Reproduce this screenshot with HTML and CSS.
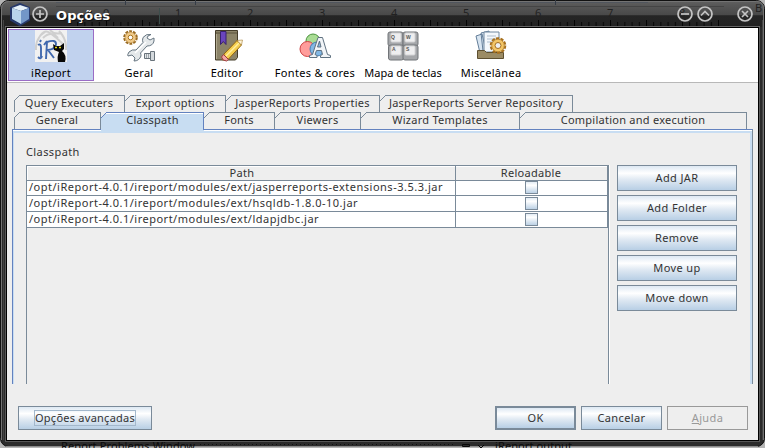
FILE: index.html
```html
<!DOCTYPE html>
<html lang="pt">
<head>
<meta charset="utf-8">
<title>Opções</title>
<link rel="stylesheet" href="styles.css">
</head>
<body>
<svg class="backdrop" width="765" height="448" viewBox="0 0 765 448" aria-hidden="true">
  <defs>
    <linearGradient id="bar" x1="0" y1="0" x2="0" y2="1"><stop offset="0" stop-color="#606060"/><stop offset=".15" stop-color="#585858"/><stop offset=".55" stop-color="#484848"/><stop offset=".56" stop-color="#252525"/><stop offset="1" stop-color="#222"/></linearGradient>
    <pattern id="tick" x="106" y="21" width="7.2" height="5" patternUnits="userSpaceOnUse"><path d="M.5 1v4" stroke="#050505"/></pattern>
    <pattern id="half" x="106" y="18" width="36" height="8" patternUnits="userSpaceOnUse"><path d="M.5 2v6" stroke="#050505"/></pattern>
    <pattern id="dots" width="4" height="4" patternUnits="userSpaceOnUse"><path d="M0 .5h1M2 2.5h1" stroke="#111"/></pattern>
  </defs>
  <rect width="765" height="448" fill="#b5b5b5"/>
  <rect x=".5" y=".5" width="764" height="446" rx="8" fill="#2b2b2b" stroke="#111"/>
  <path d="M1 27V9q0-8 8-8h747q8 0 8 8v18z" fill="url(#bar)"/>
  <path d="M1.500 440V9q0-7.500 8-7.500h747q7 0 7 7.500v431" fill="none" stroke="#737373"/>
  <path d="M56 2.500h592" stroke="#50555d"/><path d="M125.500 0v5M195.500 0v5M555.500 0v5" stroke="#353c46"/>
  <path d="M56 6.500h668" stroke="#444"/>
  <path d="M159.500 8v16" stroke="#3d4e4c"/>
  <rect x="77" y="21" width="642" height="5" fill="url(#tick)"/>
  <rect x="77" y="18" width="642" height="8" fill="url(#half)"/>
  <path d="M5 26.500h755" stroke="#666"/><path d="M5.500 27v415M759.500 27v415" stroke="#5a5a5a"/>
  <path d="M3.500 20v420M762.500 20v420" stroke="#444"/>
  <path d="M5 441.500h755" stroke="#555"/><path d="M6 446.500h752" stroke="#8a8a8a"/>
  <rect x="200" y="443" width="253" height="3" fill="url(#dots)"/>
  <rect x="6" y="27" width="753" height="414" fill="#000"/>
  <g class="ghost"><text x="103" y="17">0</text><text x="175" y="17">1</text><text x="247" y="17">2</text><text x="319" y="17">3</text><text x="391" y="17">4</text><text x="463" y="17">5</text><text x="535" y="17">6</text><text x="607" y="17">7</text><text x="679" y="17">8</text>
  <text x="755" y="12">B</text></g>
  <g class="ghost low"><text x="61" y="450" textLength="134">Report Problems Window</text><text x="495" y="450" textLength="77">iReport output</text></g>
  <path d="M462.500 444.500h7v2h-7zM478 445l3 3 3-3" fill="none" stroke="#080808"/>
</svg>
<main class="dialog">
  <header class="titlebar">
    <svg width="24" height="24" viewBox="0 0 24 24"><path d="M12 1L3 5v12l9 5 9-5V5z" fill="#182a55" stroke="#26386a" stroke-width="2"/><path d="M12 2L4 5l9 3 8-3z" fill="#e6f1f9"/><path d="M4 5l9 3v13l-9-5z" fill="#b9d4ec"/><path d="M13 8l8-3v11l-8 5z" fill="#7396c8"/></svg>
    <svg class="plus" width="18" height="18" viewBox="0 0 18 18"><circle cx="9" cy="9" r="7"/><path d="M5 9h8M9 5v8"/></svg>
    <h1>Opções</h1>
    <div class="controls">
      <svg width="18" height="18" viewBox="0 0 18 18"><circle cx="9" cy="9" r="7"/><path d="M5 9h8"/></svg>
      <svg width="18" height="18" viewBox="0 0 18 18"><circle cx="9" cy="9" r="7"/><path d="M5 10.500l4-4 4 4"/></svg>
      <svg class="close" width="18" height="18" viewBox="0 0 18 18"><circle cx="9" cy="9" r="7"/><path d="M6 6l6 6M12 6l-6 6"/></svg>
    </div>
  </header>
  <nav class="toolbar">
    <a class="tool active"><svg width="32" height="32" viewBox="0 0 32 32"><rect width="32" height="32" fill="#f1f1f1"/><path d="M3 10Q8-2 15 3t13 11M8 8q8-8 15 0M1 20Q0 8 10 2M24 1q8 8 7 19M15 0q4 5 12 3" fill="none" stroke="#cfcfcf" stroke-width="2"/><path d="M3 15q3-2 3 3v9M5 12l1-2M11 29l1-17q9-3 9 2 0 5-8 6l6 8M12 11l-3 4M3 27q3 3 4-1" fill="none" stroke="#4169ae" stroke-width="1.900"/><path d="M18 14l3 2h4l4-3v6l-2 2q5 4 3 11h-7q-1-6 1-10l-5-2z" fill="#080808"/><path d="M27 31q4-3 1-6" stroke="#080808" fill="none"/><path d="M20 17.500h2M24 17.500h2" stroke="#e9dc18" stroke-width="1.500"/></svg><span>iReport</span></a>
    <a class="tool"><svg width="32" height="32" viewBox="0 0 32 32"><circle cx="7.500" cy="7.500" r="6.300" fill="none" stroke="#996a22" stroke-width="2" stroke-dasharray="2.800 1.150"/><circle cx="7.500" cy="7.500" r="5.300" fill="#f0c987" stroke="#bd8c3c" stroke-width=".7"/><circle cx="7.500" cy="7.500" r="2.300" fill="#fff" stroke="#a87623"/><path d="M28 4.500q-5-1-8 3-1 3 0 5L13 20q-4-1-7 2-2 3-1 4l4-1 3 3-1 3q5 0 7-5 0-2-.5-3L24 16q6 0 7-5l0-3-4 2-3-2 1-2z" fill="#e4e8ea" stroke="#667581" stroke-linejoin="round"/><path d="M12 23l11-11" stroke="#fff" stroke-width="1.500"/><path d="M21.500 23.500h6v5h-6z" fill="#e3e6e8" stroke="#68727a"/><path d="M23.500 24v4M25.500 24v4" stroke="#9aa3a9"/><path d="M27.500 21.500h4v9h-4z" fill="#d3d8dc" stroke="#68727a"/></svg><span>Geral</span></a>
    <a class="tool"><svg width="32" height="32" viewBox="0 0 32 32"><g transform="translate(4 0)"><path d="M.5.500h22v27l-2 2.500H.5z" fill="#8b8368" stroke="#443c29"/><path d="M1 3h21" stroke="#58503a"/><path d="M1.500 4v25" stroke="#b0a98e"/><path d="M5.500 1.500h5.500v13l-2.700-3-2.800 3z" fill="#6a45bd" stroke="#38206d"/><path d="M9 24L22 10.500l4.500 4.500-13 14-6 1z" fill="#f5cf51" stroke="#926512"/><path d="M11 26l13-13" stroke="#fff0a1" stroke-width="1.500"/><path d="M8.500 24.500l5 5-2 1.500q-4 0-5-4z" fill="#f3a5a3" stroke="#9c3c3c"/><path d="M22 10.500l4.500 4.500 1-5z" fill="#fff4d6" stroke="#926512" stroke-width=".5"/></g></svg><span>Editor</span></a>
    <a class="tool"><svg width="32" height="32" viewBox="0 0 32 32"><circle cx="14" cy="11" r="7" fill="#a9dc94" stroke="#4b943d"/><circle cx="8.500" cy="19" r="7.500" fill="#ff9d9b" stroke="#cd4242"/><circle cx="18" cy="19" r="7" fill="#83b8e5" stroke="#447eaf"/><path d="M10.500 27.500v-2l3-1L19 7.500h4.500l5 17 3 1v2h-10v-2l2-1-1-4h-5l-1.500 4 2 1v2zM18.500 17h3.500l-1.500-6z" fill="#f2f5f8" stroke="#5f7180"/></svg><span>Fontes &amp; cores</span></a>
    <a class="tool"><svg width="32" height="32" viewBox="0 0 32 32"><g fill="#a5a7aa" stroke="#717478"><rect x="1" y="2" width="15" height="14" rx="2"/><rect x="16" y="2" width="15" height="14" rx="2"/><rect x="1.500" y="15" width="15" height="15" rx="2"/><rect x="16" y="15" width="15" height="15" rx="2"/></g><g fill="#eeeeef" stroke="#d4d4d5"><rect x="4" y="3" width="10" height="9" rx="1"/><rect x="18" y="3" width="10" height="9" rx="1"/><rect x="4" y="16" width="10" height="9" rx="1"/><rect x="18" y="16" width="10" height="9" rx="1"/></g><g class="keys"><text x="4" y="9">Q</text><text x="19" y="9">W</text><text x="5" y="21">A</text><text x="19" y="21">S</text></g></svg><span class="map">Mapa de teclas</span></a>
    <a class="tool"><svg width="32" height="32" viewBox="0 0 32 32"><path d="M1 6l6-2 4 17-6 2zM6 3l8-2 2 20H8z" fill="#d8e5f1" stroke="#647e99"/><path d="M9 2h15v20H9z" fill="#f4f8fc" stroke="#7188a0"/><path d="M12 6h9M12 9h9M12 12h6" stroke="#aebdcd"/><path d="M2.500 20.500h7l2 2h17v6h-26z" fill="#9b8b64" stroke="#5e5031"/><circle cx="23" cy="15.500" r="7.300" fill="none" stroke="#a66f1d" stroke-width="2" stroke-dasharray="3.300 1.290"/><circle cx="23" cy="15.500" r="6.300" fill="#f3c667" stroke="#b37a22" stroke-width=".8"/><circle cx="23" cy="15.500" r="3" fill="#eef0f2" stroke="#a46e20"/></svg><span>Miscelânea</span></a>
  </nav>
  <section class="body">
    <div class="tabs upper"><a class="tab t1">Query Executers</a><a class="tab t2">Export options</a><a class="tab t3">JasperReports Properties</a><a class="tab t4">JasperReports Server Repository</a></div>
    <div class="tabs lower"><a class="tab b1">General</a><a class="tab b2 selected">Classpath</a><a class="tab b3">Fonts</a><a class="tab b4">Viewers</a><a class="tab b5">Wizard Templates</a><a class="tab b6">Compilation and execution</a></div>
    <div class="panel">
      <div class="listing">
        <h2>Classpath</h2>
        <div class="scroll">
          <div class="row head"><span>Path</span><span>Reloadable</span></div>
          <div class="row"><span>/opt/iReport-4.0.1/ireport/modules/ext/jasperreports-extensions-3.5.3.jar</span><span><i class="check"></i></span></div>
          <div class="row"><span>/opt/iReport-4.0.1/ireport/modules/ext/hsqldb-1.8.0-10.jar</span><span><i class="check"></i></span></div>
          <div class="row"><span>/opt/iReport-4.0.1/ireport/modules/ext/ldapjdbc.jar</span><span><i class="check"></i></span></div>
        </div>
      </div>
      <div class="actions"><button>Add JAR</button><button>Add Folder</button><button>Remove</button><button>Move up</button><button>Move down</button></div>
    </div>
    <footer><button class="advanced"><span>Opções avançadas</span></button><button class="ok">OK</button><button>Cancelar</button><button class="off"><u>A</u>juda</button></footer>
  </section>
</main>
</body>
</html>
```
FILE: styles.css
```css
* { box-sizing: border-box; }
body { margin: 0; width: 765px; height: 448px; overflow: hidden; font: 11px/14px "Noto Sans", sans-serif; letter-spacing: .4px; color: #333; }
.backdrop { position: absolute; left: 0; top: 0; z-index: -1; }
.ghost { font: 11px "Noto Sans", sans-serif; letter-spacing: 0; fill: #222; }
.low { fill: #0c0c0c; }
.dialog { width: 765px; height: 440px; padding: 0 7px; }
.titlebar { height: 28px; display: flex; align-items: center; }
.titlebar svg { fill: none; stroke: #c4c4c4; stroke-width: 1.7; flex: none; }
.titlebar > svg:first-child { stroke: none; margin: 1px 0 0 1px; }
.titlebar .plus { margin-left: -1px; }
h1 { margin: 3px 0 0 7px; color: #fff; font: bold 13px/20px "DejaVu Sans", sans-serif; letter-spacing: .1px; text-shadow: 1px 1px #111; }
.controls { margin-left: auto; display: flex; gap: 2px; padding-right: 4px; }
.controls .close { margin-left: 20px; }
.toolbar { height: 55px; padding: 1px; background: #fff; border-bottom: 1px solid #b8b8b8; display: flex; gap: 2px; }
.tool { width: 86px; height: 52px; display: flex; flex-direction: column; align-items: center; border: 1px solid transparent; color: #000; line-height: 18px; white-space: nowrap; }
.tool span { margin-top: 2px; letter-spacing: .3px; }
.tool .map { letter-spacing: 0; }
.tool svg { flex: none; }
.tool.active { background: #c1d2ee; border-color: #9a6cc5; }
.keys { font: bold 5px "Liberation Sans", sans-serif; fill: #555; }
.body { background: #eee; height: 357px; padding: 12px 5px 0; }
.tabs { display: flex; height: 17px; padding-left: 2px; }
.tab { position: relative; border-top: 1px solid #7a8a99; border-right: 1px solid #7a8a99; height: 17px; line-height: 14px; text-align: center; white-space: nowrap; letter-spacing: .25px; }
.tab::before { content: ""; position: absolute; left: 0; top: -1px; width: 6px; height: 6px; background: linear-gradient(135deg, #eee 43%, #7a8a99 44%, #7a8a99 54%, transparent 55%); }
.tab:first-child::after { content: ""; position: absolute; left: 0; top: 5px; height: 11px; border-left: 1px solid #7a8a99; }
.t1 { width: 111px; } .t2 { width: 101px; } .t3 { width: 154px; } .t4 { width: 193px; }
.b1 { width: 87px; } .b2 { width: 103px; } .b3 { width: 71px; } .b4 { width: 86px; } .b5 { width: 159px; } .b6 { width: 227px; }
.selected { background: #c8ddf2; border-color: #6382bf; box-shadow: inset 0 1px #fff; height: 20px; z-index: 1; }
.selected::before { background: linear-gradient(135deg, #eee 43%, #6382bf 44%, #6382bf 54%, transparent 55%); }
.b2.selected { border-right: 0; }
.b2.selected::after { content: ""; position: absolute; right: 0; top: 0; height: 17px; border-right: 1px solid #6382bf; }
.panel { width: 741px; height: 255px; border: solid #7a8a99; border-width: 1px 1px 0; border-top-color: #6382bf; border-left-color: #6382bf; box-shadow: inset 0 1px #fff, inset 1px 0 #c8ddf2, inset 0 3px #c8ddf2, inset -2px 0 #c8ddf2; padding: 15px 14px 0 13px; display: flex; }
h2 { font: inherit; margin: 0; height: 20px; line-height: 14px; }
.scroll { width: 583px; height: 219px; border: solid #7a8a99; border-width: 1px 1px 0; box-shadow: 1px 0 #fff; }
.row { display: grid; grid-template-columns: 429px 152px; width: 581px; height: 16px; background: #fff; }
.row > span { border-right: 1px solid #7a8a99; border-bottom: 1px solid #7a8a99; line-height: 14px; white-space: nowrap; padding-left: 2px; letter-spacing: .5px; }
.row > span:last-child { display: flex; justify-content: center; align-items: center; padding: 0 1px 0 0; }
.head { height: 14px; background: #eee; box-shadow: inset 1px 1px #fff; }
.row.head > span { text-align: center; letter-spacing: .3px; }
.check { width: 13px; height: 13px; border: 1px solid #7a8a99; background: linear-gradient(#e4edf5, #fff 30%, #bcd1e5); }
.actions { margin: 20px 0 0 8px; display: flex; flex-direction: column; gap: 4px; }
button { font: inherit; letter-spacing: .4px; color: #333; margin: 0; padding: 0; width: 120px; height: 26px; border: 1px solid #7a8a99; background: linear-gradient(#dde8f3, #fff 30%, #e1eaf3 55%, #b8cfe5); }
footer { display: flex; padding: 22px 5px 0 6px; }
footer button { width: 81px; height: 24px; margin-left: 5px; }
footer .advanced { width: 134px; margin: 0 auto 0 0; }
.advanced span { display: block; width: 102px; height: 16px; margin: 0 auto; border: 1px solid #a3b8cc; line-height: 14px; white-space: nowrap; letter-spacing: .25px; }
footer .ok { border-width: 2px; }
footer .off { color: #999; border-color: #999; background: #eee; }
```
